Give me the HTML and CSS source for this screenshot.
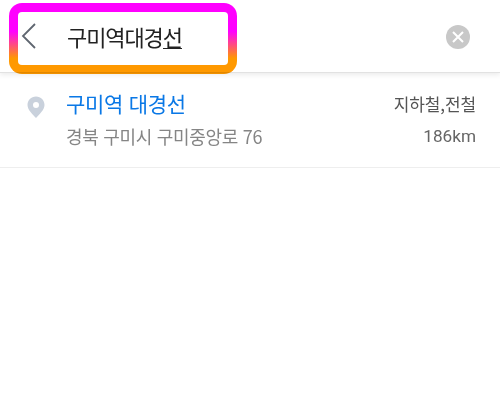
FILE: index.html
```html
<!DOCTYPE html>
<html lang="ko">
<head>
<meta charset="utf-8">
<title>구미역대경선</title>
<link rel="stylesheet" href="styles.css">
</head>
<body>
<header class="bar">
  <svg class="back" width="16" height="26" viewBox="0 0 16 26"><path d="M14 1 L2 13 L14 25" fill="none" stroke="#5f6670" stroke-width="1.8"/></svg>
  <div class="query">구미역대경<span class="composing">선</span></div>
  <svg class="clear" width="24" height="24" viewBox="0 0 24 24"><circle cx="12" cy="12" r="12" fill="#c8c8c8"/><path d="M7 7 L17 17 M17 7 L7 17" stroke="#fff" stroke-width="2"/></svg>
  <div class="highlight"></div>
</header>
<section class="row">
  <svg class="pin" width="18" height="22" viewBox="0 0 18 22"><path fill-rule="evenodd" fill="#c9d1dc" d="M9 0.5 C4 0.5 0.5 4.2 0.5 9 C0.5 14 6 18.5 9 22 C12 18.5 17.5 14 17.5 9 C17.5 4.2 14 0.5 9 0.5 Z M9 6 A3 3 0 1 1 9 12 A3 3 0 1 1 9 6 Z"/></svg>
  <div class="main">
    <div class="name">구미역 대경선</div>
    <div class="addr">경북 구미시 구미중앙로 76</div>
  </div>
  <div class="meta">
    <div class="kind">지하철,전철</div>
    <div class="dist">186km</div>
  </div>
</section>
</body>
</html>
```
FILE: styles.css
```css
html, body { margin: 0; padding: 0; background: #fff; }
body { width: 500px; height: 411px; overflow: hidden; font-family: "Noto Sans CJK KR", "Noto Sans", sans-serif; }
.bar { position: relative; height: 73px; display: flex; align-items: center; padding: 0 30px 0 21px; box-sizing: border-box; border-bottom: 1px solid #e2e2e2; box-shadow: 0 2px 5px rgba(0,0,0,.08); }
.back { flex: none; }
.query { flex: 1; margin-left: 30px; margin-bottom: 1px; font-size: 22px; letter-spacing: -1.1px; color: #222; line-height: 30px; }
.composing { display: inline-block; line-height: 23px; border-bottom: 1px solid #222; }
.clear { flex: none; margin-top: 1px; }
.highlight { position: absolute; left: 9px; top: 3px; width: 228px; height: 71px; box-sizing: border-box; border: 9px solid transparent; border-radius: 13px; pointer-events: none; background: linear-gradient(#fff,#fff) padding-box, linear-gradient(#ff00ff 0%, #ff00ff 40%, #ff9900 78%, #ff9900 100%) border-box; mix-blend-mode: multiply; }
.row { display: flex; height: 95px; box-sizing: border-box; padding: 14px 24px 0 27px; border-bottom: 1px solid #eee; }
.pin { flex: none; margin-top: 9px; }
.main { flex: 1; margin-left: 21px; }
.name { font-size: 21px; line-height: 32px; color: #0a78e6; letter-spacing: -0.3px; }
.addr { font-size: 18px; line-height: 28px; margin-top: 3px; color: #858585; letter-spacing: -0.3px; }
.meta { text-align: right; color: #555; font-family: "Noto Sans CJK KR", Roboto, sans-serif; }
.kind { font-size: 17px; line-height: 32px; margin-top: 1px; letter-spacing: -0.1px; }
.dist { font-size: 17.2px; font-family: Roboto, sans-serif; line-height: 28px; margin-top: 2px; color: #666; }
```
